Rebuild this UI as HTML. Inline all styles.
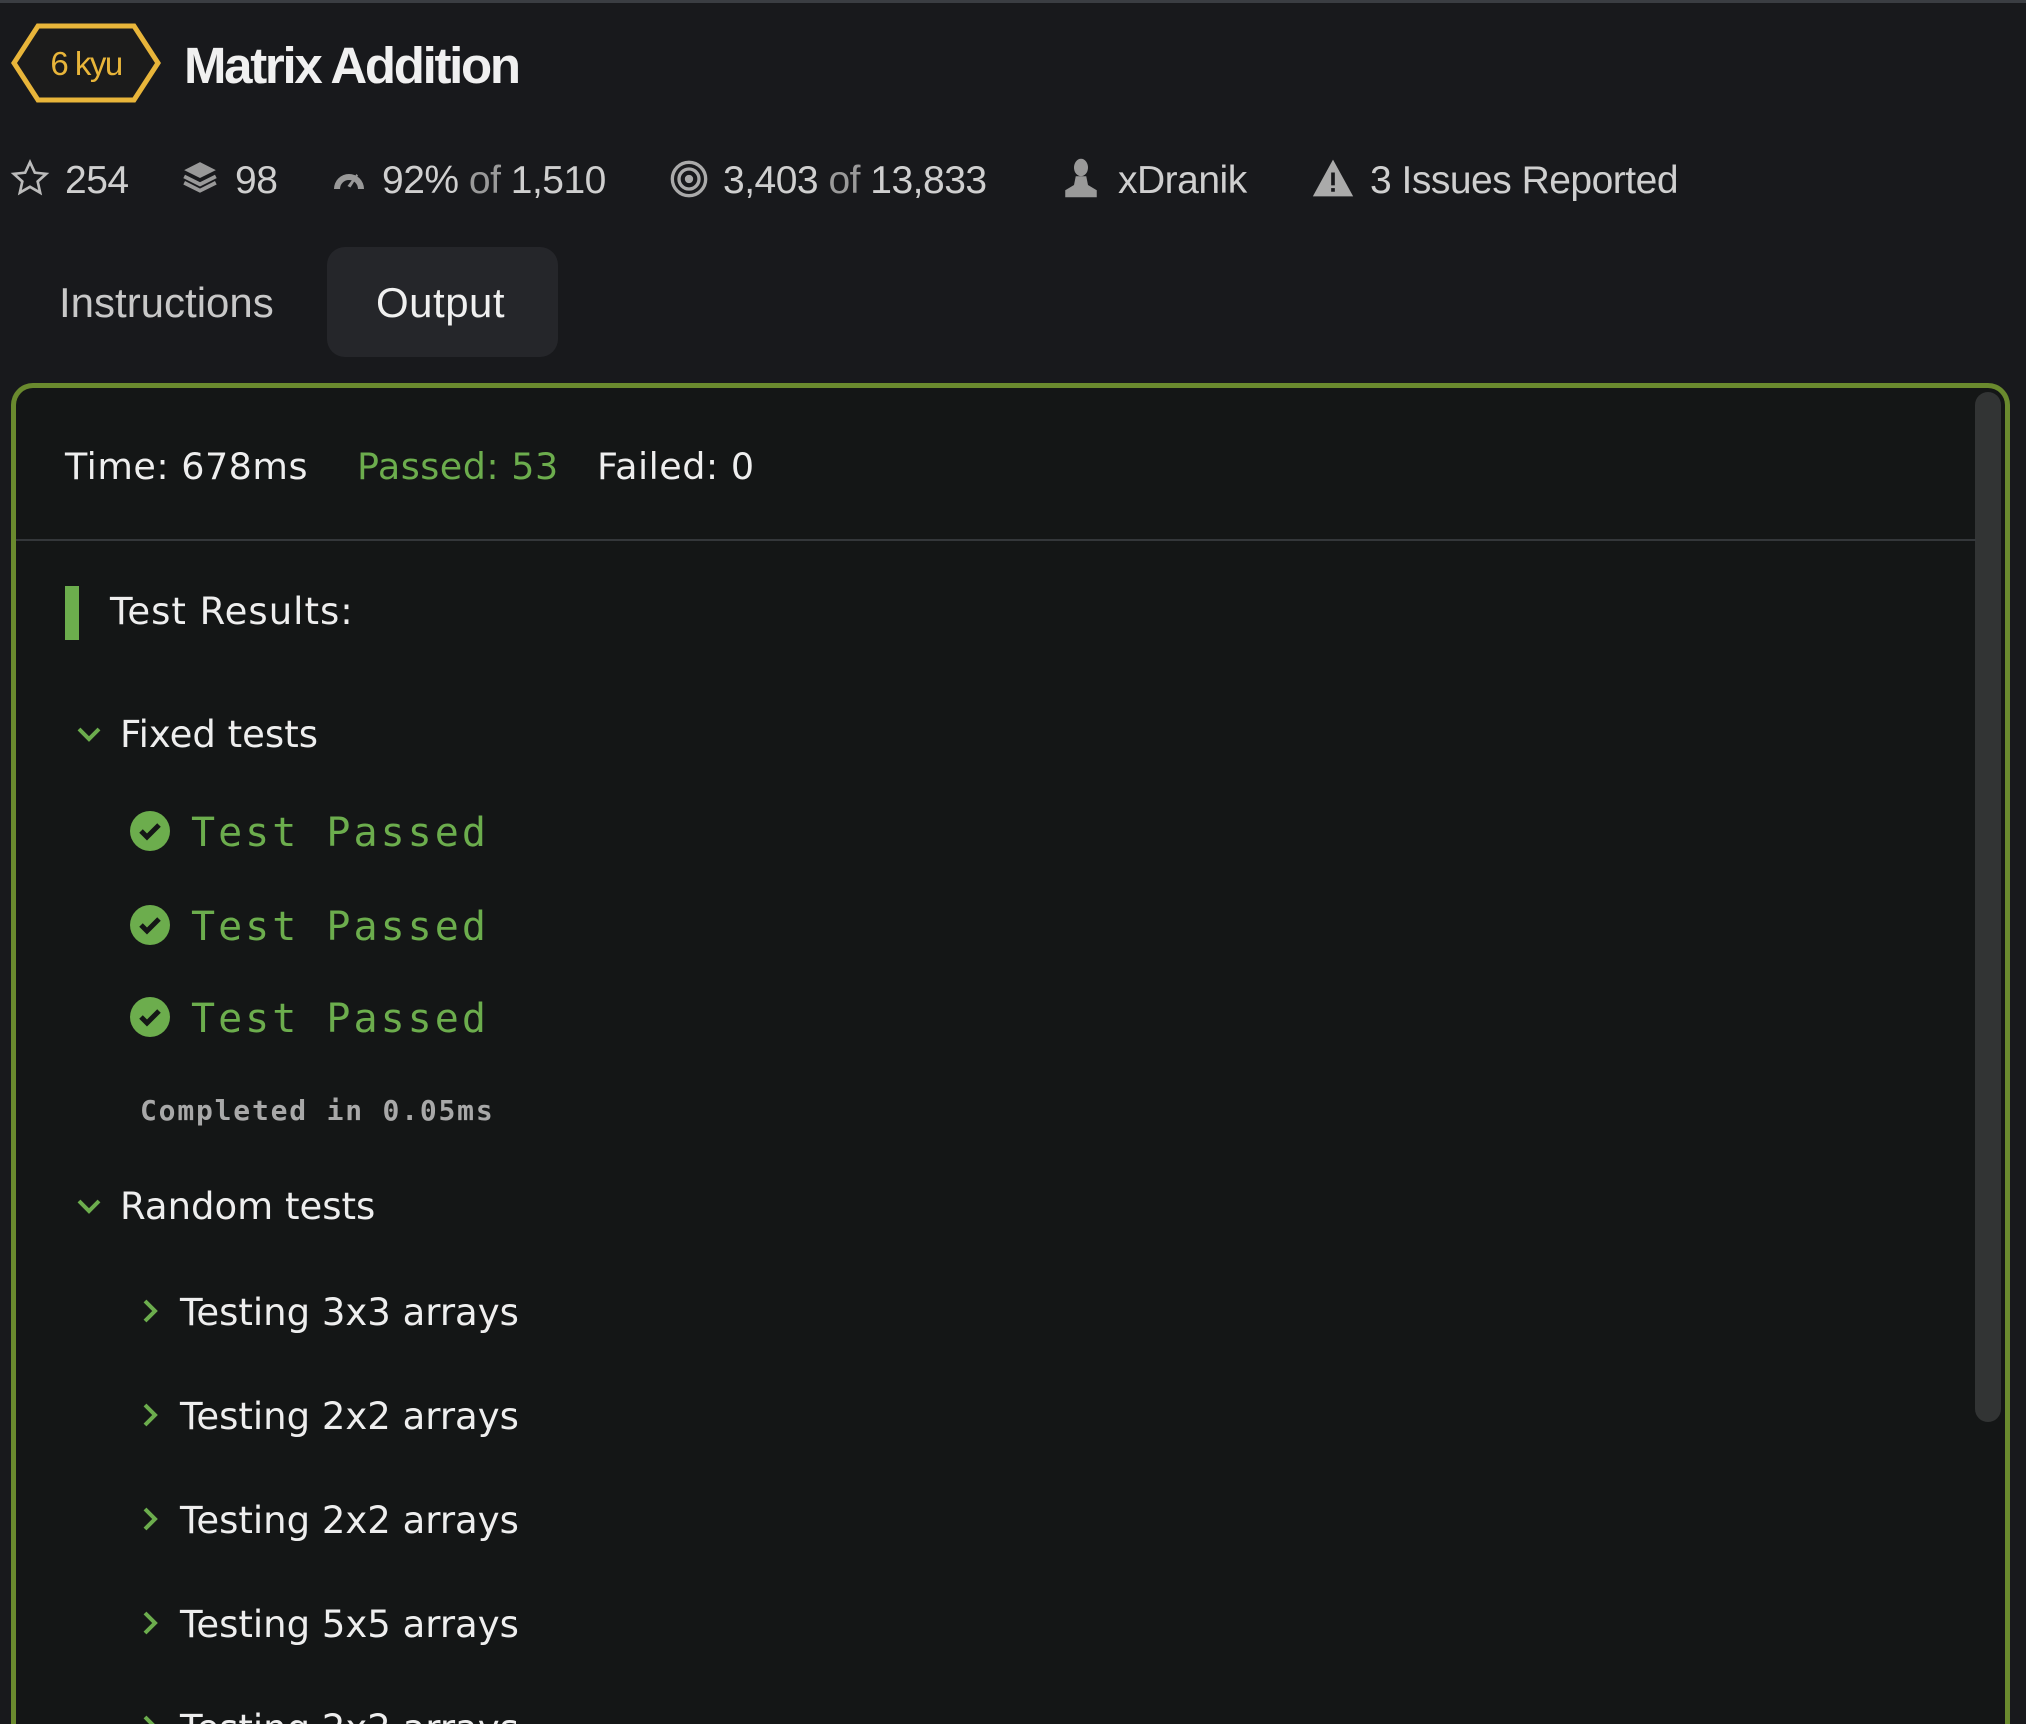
<!DOCTYPE html>
<html style="overflow:hidden;height:1724px"><head><meta charset="utf-8"><style>
*{margin:0;padding:0;box-sizing:border-box}
body{width:2026px;height:1724px;background:#18191c;overflow:hidden;position:relative;font-family:"Liberation Sans",sans-serif;color:#d4d4d4}
.a{position:absolute;white-space:nowrap}
.st{font-size:39px;color:#cfcfcf;top:158px;letter-spacing:-0.5px;line-height:46px}
.st .o{color:#9a9a9a}
.panel{position:absolute;left:11px;top:383px;width:1999px;height:1341px;border:5px solid #6a8a2e;border-bottom:none;border-radius:22px 22px 0 0;background:#141616;overflow:hidden}
.p{font-family:"DejaVu Sans","Liberation Sans",sans-serif}
.tp{font-family:"DejaVu Sans Mono","Liberation Mono",monospace;font-size:40px;color:#6cad4d;letter-spacing:3px}
</style></head><body>
<div class="a" style="left:0;top:0;width:2026px;height:3px;background:#3a3d42"></div>
<svg class="a" style="left:10px;top:23px" width="152" height="80" viewBox="0 0 152 80"><polygon points="28,3 124,3 148,40 124,77 28,77 4,40" fill="#1b1b1b" stroke="#e8b53a" stroke-width="5"/><text x="76" y="52" fill="#e8b53a" font-family="Liberation Sans" font-size="33" text-anchor="middle" letter-spacing="-1.5">6 kyu</text></svg>
<div class="a" style="left:184px;top:36px;font-size:51px;font-weight:bold;color:#f0f0f0;letter-spacing:-2.3px;line-height:60px">Matrix Addition</div>

<svg class="a" style="left:10px;top:158px" width="40" height="40" viewBox="0 0 24 24"><path d="M12 2.5l2.9 6.3 6.8.7-5.1 4.6 1.5 6.7L12 17.3l-6.1 3.5 1.5-6.7L2.3 9.5l6.8-.7z" fill="none" stroke="#bbb" stroke-width="1.6"/></svg>
<div class="a st" style="left:65px">254</div>
<svg class="a" style="left:181px;top:158px" width="38" height="40" viewBox="0 0 24 24"><path d="M12 2l10 5-10 5L2 7z" fill="#999"/><path d="M2 11l10 5 10-5M2 15l10 5 10-5" fill="none" stroke="#999" stroke-width="2.4"/></svg>
<div class="a st" style="left:235px">98</div>
<svg class="a" style="left:329px;top:162px" width="40" height="36" viewBox="0 0 24 24"><path d="M2 18A10 10 0 0 1 22 18h-4A6 6 0 0 0 6 18z" fill="#999"/><path d="M11 16l6-8 1 1-5 8z" fill="#999"/></svg>
<div class="a st" style="left:382px">92% <span class="o">of</span> 1,510</div>
<svg class="a" style="left:669px;top:159px" width="40" height="40" viewBox="0 0 24 24"><circle cx="12" cy="12" r="10" fill="none" stroke="#aaa" stroke-width="2"/><circle cx="12" cy="12" r="6" fill="none" stroke="#aaa" stroke-width="2"/><circle cx="12" cy="12" r="2.5" fill="#aaa"/></svg>
<div class="a st" style="left:723px">3,403 <span class="o">of</span> 13,833</div>
<svg class="a" style="left:1062px;top:157px" width="38" height="42" viewBox="0 0 20 24"><ellipse cx="10" cy="6" rx="4" ry="5" fill="#999"/><path d="M7 11h6l1 5 5 3v4H1v-4l5-3z" fill="#999"/></svg>
<div class="a st" style="left:1118px">xDranik</div>
<svg class="a" style="left:1311px;top:157px" width="44" height="42" viewBox="0 0 24 22"><path d="M12 1L23 21H1z" fill="#aaa"/><rect x="11" y="8" width="2" height="7" fill="#18191c"/><rect x="11" y="16.5" width="2" height="2" fill="#18191c"/></svg>
<div class="a st" style="left:1370px">3 Issues Reported</div>

<div class="a" style="left:59px;top:279px;font-size:42px;color:#c8c8c8;letter-spacing:0">Instructions</div>
<div class="a" style="left:327px;top:247px;width:231px;height:110px;background:#25262a;border-radius:18px"></div>
<div class="a" style="left:376px;top:279px;font-size:42px;color:#f0f0f0;letter-spacing:0.5px">Output</div>

<div class="panel">
<div class="a" style="right:4px;top:4px;width:26px;height:1030px;background:#323434;border-radius:13px"></div>
<div class="a p" style="left:49px;top:57px;font-size:36.5px;color:#eee;letter-spacing:0.5px">Time: 678ms</div>
<div class="a p" style="left:341px;top:57px;font-size:36.5px;color:#6cad4d;letter-spacing:0.5px">Passed: 53</div>
<div class="a p" style="left:581px;top:57px;font-size:36.5px;color:#eee;letter-spacing:0.5px">Failed: 0</div>
<div class="a" style="left:0;top:151px;width:1960px;height:2px;background:#34373a"></div>
<div class="a" style="left:49px;top:198px;width:14px;height:54px;background:#6cad4d"></div>
<div class="a p" style="left:94px;top:202px;font-size:37px;color:#eee;letter-spacing:1px">Test Results:</div>

<svg class="a" style="left:60px;top:336px" width="26" height="20" viewBox="0 0 26 20"><path d="M3 5l10 10 10-10" fill="none" stroke="#6cad4d" stroke-width="4"/></svg>
<div class="a p" style="left:104px;top:325px;font-size:37px;color:#eee">Fixed tests</div>

<svg class="a" style="left:114px;top:423px" width="40" height="40" viewBox="0 0 20 20"><circle cx="10" cy="10" r="10" fill="#6cad4d"/><path d="M5.5 10l3 3 6-6" fill="none" stroke="#141616" stroke-width="2.5"/></svg>
<div class="a tp" style="left:175px;top:422px">Test Passed</div>
<svg class="a" style="left:114px;top:517px" width="40" height="40" viewBox="0 0 20 20"><circle cx="10" cy="10" r="10" fill="#6cad4d"/><path d="M5.5 10l3 3 6-6" fill="none" stroke="#141616" stroke-width="2.5"/></svg>
<div class="a tp" style="left:175px;top:516px">Test Passed</div>
<svg class="a" style="left:114px;top:609px" width="40" height="40" viewBox="0 0 20 20"><circle cx="10" cy="10" r="10" fill="#6cad4d"/><path d="M5.5 10l3 3 6-6" fill="none" stroke="#141616" stroke-width="2.5"/></svg>
<div class="a tp" style="left:175px;top:608px">Test Passed</div>
<div class="a" style="left:124px;top:706px;font-family:'DejaVu Sans Mono',monospace;font-weight:bold;font-size:28px;color:#a8a8a8;letter-spacing:1.8px">Completed in 0.05ms</div>

<svg class="a" style="left:60px;top:808px" width="26" height="20" viewBox="0 0 26 20"><path d="M3 5l10 10 10-10" fill="none" stroke="#6cad4d" stroke-width="4"/></svg>
<div class="a p" style="left:104px;top:797px;font-size:37px;color:#eee">Random tests</div>

<svg class="a" style="left:124px;top:910px" width="20" height="26" viewBox="0 0 20 26"><path d="M5 3l10 10-10 10" fill="none" stroke="#6cad4d" stroke-width="4"/></svg>
<div class="a p" style="left:164px;top:903px;font-size:37px;color:#eee">Testing 3x3 arrays</div>
<svg class="a" style="left:124px;top:1014px" width="20" height="26" viewBox="0 0 20 26"><path d="M5 3l10 10-10 10" fill="none" stroke="#6cad4d" stroke-width="4"/></svg>
<div class="a p" style="left:164px;top:1007px;font-size:37px;color:#eee">Testing 2x2 arrays</div>
<svg class="a" style="left:124px;top:1118px" width="20" height="26" viewBox="0 0 20 26"><path d="M5 3l10 10-10 10" fill="none" stroke="#6cad4d" stroke-width="4"/></svg>
<div class="a p" style="left:164px;top:1111px;font-size:37px;color:#eee">Testing 2x2 arrays</div>
<svg class="a" style="left:124px;top:1222px" width="20" height="26" viewBox="0 0 20 26"><path d="M5 3l10 10-10 10" fill="none" stroke="#6cad4d" stroke-width="4"/></svg>
<div class="a p" style="left:164px;top:1215px;font-size:37px;color:#eee">Testing 5x5 arrays</div>
<svg class="a" style="left:124px;top:1326px" width="20" height="26" viewBox="0 0 20 26"><path d="M5 3l10 10-10 10" fill="none" stroke="#6cad4d" stroke-width="4"/></svg>
<div class="a p" style="left:164px;top:1319px;font-size:37px;color:#eee">Testing 2x2 arrays</div>
</div>
</body></html>
